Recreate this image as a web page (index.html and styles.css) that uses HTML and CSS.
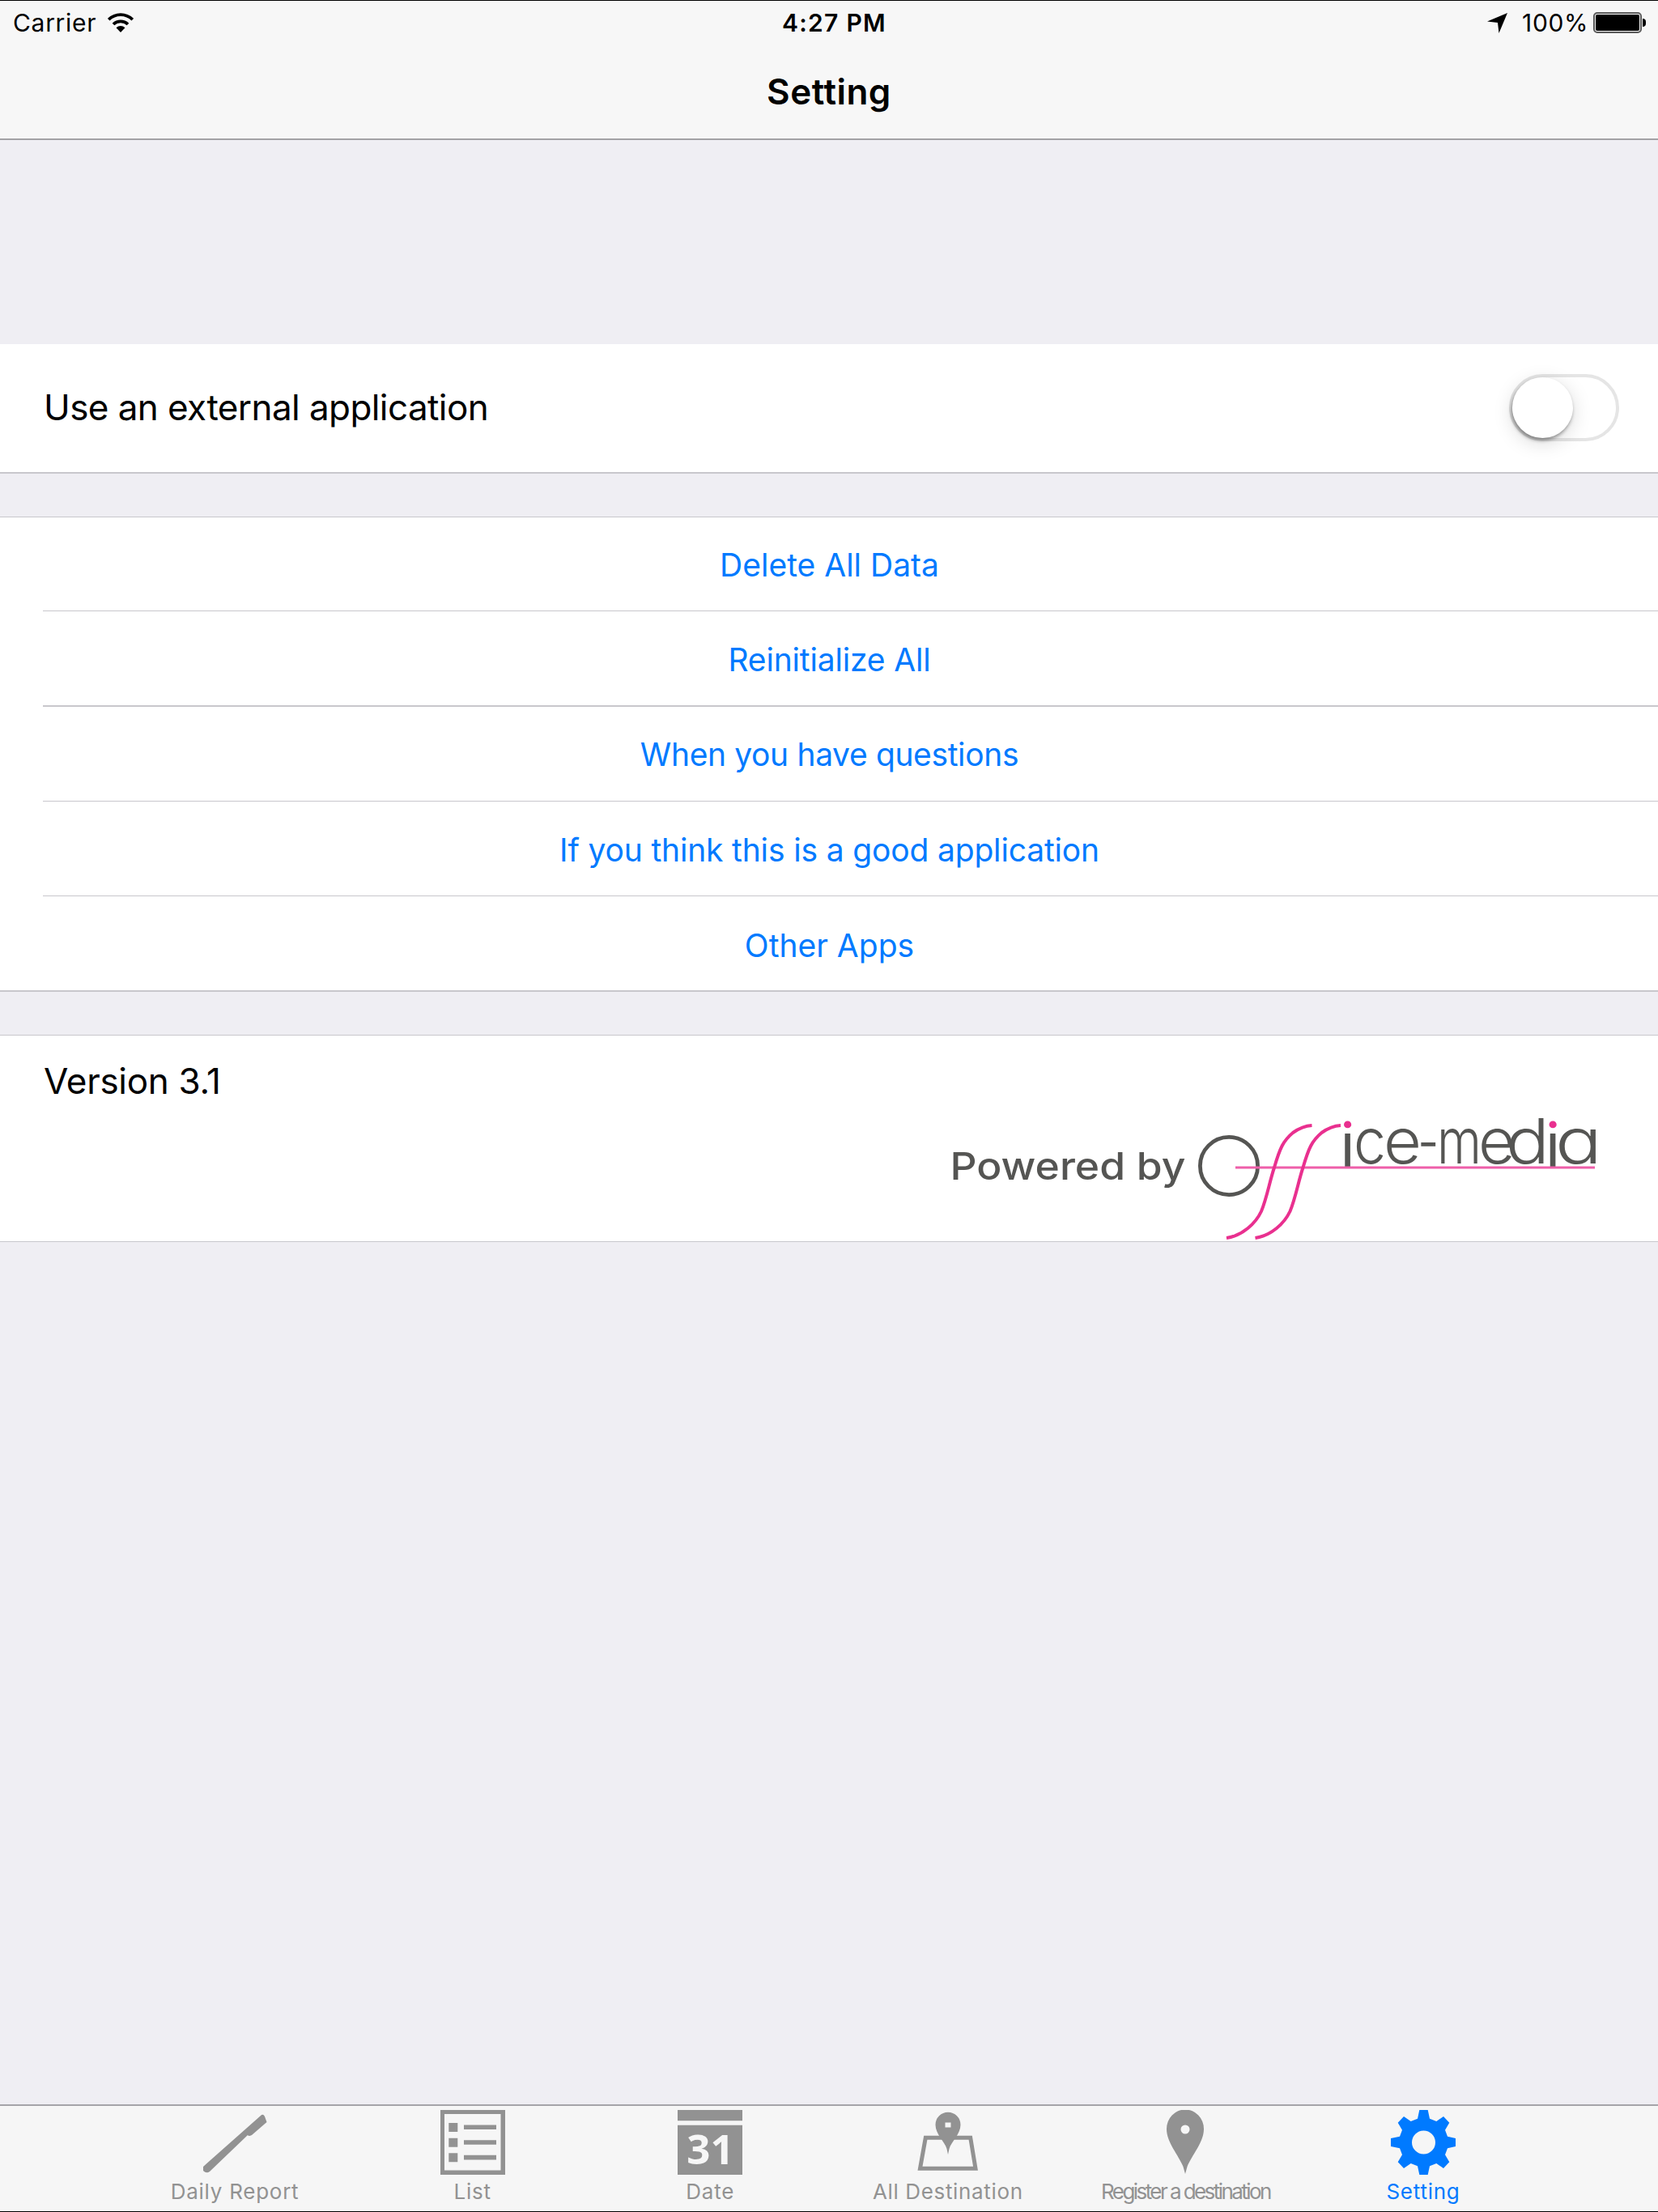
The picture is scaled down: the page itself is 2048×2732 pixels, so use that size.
FILE: index.html
```html
<!DOCTYPE html>
<html lang="en">
<head>
<meta charset="utf-8">
<title>Setting</title>
<link rel="stylesheet" href="styles.css">
</head>
<body>
<div class="screen">
  <header class="navbar">
    <div class="status">
      <div class="status-left">
        <span class="carrier">Carrier</span>
        <svg class="wifi" viewBox="0 0 32 24" width="32" height="24">
          <path d="M1.2 8.2A21 21 0 0 1 30.8 8.2M7 14A13 13 0 0 1 25 14" fill="none" stroke="#000" stroke-width="3.8"/>
          <path d="M10.500 18.300A8 8 0 0 1 21.500 18.300L16 24Z"/>
        </svg>
      </div>
      <span class="clock">4:27 PM</span>
      <div class="status-right">
        <svg class="location" viewBox="0 0 25 25" width="25" height="25"><path d="M25 0L14.500 25L13 12L0 10.500Z"/></svg>
        <span class="percent">100%</span>
        <span class="battery"><span class="battery-level"></span></span>
        <span class="battery-cap"></span>
      </div>
    </div>
    <h1 class="title">Setting</h1>
  </header>

  <main class="content">
    <section class="group group-switch">
      <span class="label label-tight">Use an external application</span>
      <span class="switch"><span class="switch-thumb"></span></span>
    </section>

    <section class="group actions">
      <div class="action"><a class="action-link hairline">Delete All Data</a></div>
      <div class="action"><a class="action-link tight low thick">Reinitialize All</a></div>
      <div class="action"><a class="action-link tighter hairline">When you have questions</a></div>
      <div class="action"><a class="action-link tight low hairline">If you think this is a good application</a></div>
      <div class="action"><a class="action-link lower">Other Apps</a></div>
    </section>

    <section class="group about">
      <span class="label version">Version 3.1</span>
      <svg class="logo" viewBox="1170 1382 801 149" width="801" height="149">
        <defs>
          <linearGradient id="dotted" gradientUnits="userSpaceOnUse" x1="0" y1="1382" x2="0" y2="1442">
            <stop offset=".24" stop-color="#e9308f"/>
            <stop offset=".24" stop-color="#555553"/>
          </linearGradient>
        </defs>
        <text class="powered" x="1173.500" y="1456.500" textLength="291" lengthAdjust="spacingAndGlyphs">Powered by</text>
        <circle cx="1518" cy="1440" r="35.600" fill="none" stroke="#555553" stroke-width="4.800"/>
        <text class="brand"><tspan class="brand-i" x="1655.500" y="1441">i</tspan><tspan x="1672" y="1437" textLength="40" lengthAdjust="spacingAndGlyphs">c</tspan><tspan x="1709" textLength="47" lengthAdjust="spacingAndGlyphs">e</tspan><tspan x="1751" textLength="26.500" lengthAdjust="spacingAndGlyphs">-</tspan><tspan x="1775" textLength="55" lengthAdjust="spacingAndGlyphs">m</tspan><tspan x="1826" textLength="46" lengthAdjust="spacingAndGlyphs">e</tspan><tspan x="1860" textLength="54" lengthAdjust="spacingAndGlyphs">d</tspan><tspan class="brand-i" x="1909" y="1441">i</tspan><tspan x="1921" y="1437" textLength="58" lengthAdjust="spacingAndGlyphs">a</tspan></text>
        <path d="M1526 1442H1970" stroke="#ee5fa9" stroke-width="3"/>
        <g fill="none" stroke="#e9308f" stroke-width="4">
          <path d="M1515 1529C1535 1526 1551 1511 1558 1496C1565 1479 1568 1460 1574 1442C1581 1418 1585 1409 1597 1399C1604 1394 1612 1390.500 1620.500 1390"/>
          <path d="M1550.500 1529C1570.500 1526 1586.500 1511 1593.500 1496C1600.500 1479 1603.500 1460 1609.500 1442C1616.500 1418 1620.500 1409 1632.500 1399C1639.500 1394 1647.500 1390.500 1656 1390"/>
        </g>
      </svg>
    </section>
  </main>

  <nav class="tabbar">
    <a class="tab">
      <svg class="tab-icon" viewBox="0 0 80 80"><path d="M1 70L72 7Q75 4 77 8L79.500 15L61 31Q57 33 56 31L9 76Q5 79 1 75Z"/></svg>
      <span class="tab-label">Daily Report</span>
    </a>
    <a class="tab">
      <svg class="tab-icon" viewBox="0 0 80 80"><path fill-rule="evenodd" d="M0 0H80V80H0ZM5 5V74.500H74.500V5Z"/><path d="M10.300 16h11v11h-11zM10.300 34.700h11v11h-11zM10.300 53.300h11v11h-11zM29 18.500h40v5.600H29zM29 37.200h40v5.600H29zM29 55.800h40v5.600H29z"/></svg>
      <span class="tab-label">List</span>
    </a>
    <a class="tab">
      <svg class="tab-icon" viewBox="0 0 80 80"><path d="M0 0H80V13.300H0ZM0 18.700H80V80H0Z"/><text class="day" x="40.500" y="66.500">31</text></svg>
      <span class="tab-label">Date</span>
    </a>
    <a class="tab">
      <svg class="tab-icon" viewBox="0 0 80 80"><path d="M12.300 34.200H67.700L74 72.200H5.500Z" fill="none" stroke="#929292" stroke-width="5"/><path fill-rule="evenodd" d="M40 55L38.500 48C36 39 24.500 30 24.500 18.300A15.500 15.500 0 0 1 55.500 18.300C55.500 30 44 39 41.500 48ZM36.500 15.500V21.500H43.500V15.500Z"/></svg>
      <span class="tab-label snug">All Destination</span>
    </a>
    <a class="tab">
      <svg class="tab-icon" viewBox="0 0 80 80"><path fill-rule="evenodd" d="M40 79L37.500 70C32 56 17 40 17 23.500A23 24 0 0 1 63 23.500C63 40 48 56 42.500 70ZM40 18.500A5.500 5.500 0 1 0 40 29.500A5.500 5.500 0 1 0 40 18.500Z"/></svg>
      <span class="tab-label condensed">Register a destination</span>
    </a>
    <a class="tab tab-active">
      <svg class="tab-icon" viewBox="0 0 80 80"><path fill-rule="evenodd" d="M35.300 0L33 10.700L24.700 14L16 8L8.700 15.700L14 24.700L11 32.700L0 35V45L11 47.300L14 55.300L8.700 64.300L16 72L24.700 66L33 69.300L35.300 80H45.700L48 69.300L56.300 66L65 72L72.300 64.300L67 55.300L70 47.300L80 45V35L70 32.700L67 24.700L72.300 15.700L65 8L56.300 14L48 10.700L45.700 0ZM40.500 25.500A14.500 14.500 0 1 0 40.500 54.500A14.500 14.500 0 1 0 40.500 25.500Z"/></svg>
      <span class="tab-label">Setting</span>
    </a>
  </nav>
</div>
</body>
</html>
```

FILE: styles.css
```css
* { box-sizing: border-box; }

body {
  margin: 0;
  background: #efeef3;
  color: #000;
  font-family: Inter, "Liberation Sans", sans-serif;
}

.screen {
  display: flex;
  flex-direction: column;
  height: 2732px;
  border-top: 1px solid #000;
  border-bottom: 1px solid #000;
}

/* Navigation bar */
.navbar {
  height: 172px;
  background: #f7f7f7;
  border-bottom: 2px solid #a3a2a6;
}

.status {
  display: grid;
  grid-template-columns: 1fr auto 1fr;
  align-items: center;
  height: 55px;
  padding: 0 15px 1px 16px;
  font-size: 30px;
  line-height: 36px;
}

.status-left,
.status-right { display: flex; align-items: center; }
.status-right { justify-content: flex-end; }
.carrier { letter-spacing: .7px; }
.wifi { margin: 0 0 1px 14px; }
.clock { margin-left: 12px; font-weight: 600; letter-spacing: 1.3px; }
.location { margin-right: 18px; }
.percent { margin-right: 6px; letter-spacing: .6px; }

.battery {
  width: 60px;
  height: 26px;
  padding: 1px;
  border: 2px solid #5a5a5a;
  border-radius: 5px;
}
.battery-level { display: block; height: 100%; border-radius: 2px; background: #000; }
.battery-cap {
  width: 4px;
  height: 10px;
  margin-left: 1px;
  border-radius: 0 4px 4px 0;
  background: #000;
}

.title {
  margin: 0;
  font-size: 44px;
  font-weight: 600;
  line-height: 115px;
  letter-spacing: .5px;
  text-align: center;
}

/* Grouped table */
.content { flex: 1; padding-top: 252px; }
.group { margin-bottom: 53px; background: #fff; }
.label { font-size: 44px; line-height: 56px; letter-spacing: -.3px; }
.label-tight { padding-bottom: 2px; letter-spacing: -.58px; }

.group-switch {
  display: flex;
  align-items: center;
  justify-content: space-between;
  height: 160px;
  padding: 0 48px 1px 54px;
  border-bottom: 2px solid #c8c7cc;
}

.switch {
  width: 136px;
  height: 83px;
  border: 4px solid #e5e5e5;
  border-radius: 42px;
}
.switch-thumb {
  display: block;
  width: 75px;
  height: 75px;
  border-radius: 50%;
  background: #fff;
  box-shadow: 0 6px 24px rgba(0, 0, 0, .15), -1px 3px 4px rgba(0, 0, 0, .38);
}

.actions { border-top: 1px solid #c8c7cc; border-bottom: 2px solid #c8c7cc; }
.action { padding-left: 53px; }
.action:first-child .action-link { height: 116px; }
.action-link {
  display: flex;
  align-items: center;
  justify-content: center;
  height: 116px;
  padding: 2px 52px 0 0;
  color: #007aff;
  font-size: 39px;
  line-height: 48px;
}
.action-link.hairline { height: 117px; border-bottom: 1px solid #c8c7cc; }
.action-link.thick { height: 118px; border-bottom: 2px solid #c8c7cc; }
.action-link.tight { letter-spacing: -.16px; }
.action-link.tighter { letter-spacing: -.36px; }
.action-link.low { padding-top: 3px; }
.action-link.lower { padding-top: 6px; }

.about {
  display: flex;
  align-items: flex-start;
  justify-content: space-between;
  height: 256px;
  padding: 0 77px 0 54px;
  border-top: 1px solid #c8c7cc;
  border-bottom: 1px solid #c8c7cc;
}
.version { line-height: 113px; }
.logo { display: block; margin-top: 103px; overflow: visible; }
.powered { font-size: 47px; font-weight: 500; fill: #555553; }
.brand {
  font-size: 77px;
  font-weight: 350;
  font-feature-settings: "cv11";
  fill: #555553;
}
.brand-i { font-size: 75px; font-weight: 400; fill: url(#dotted); }

/* Tab bar */
.tabbar {
  display: flex;
  justify-content: center;
  height: 132px;
  padding: 5px 0 0 0;
  background: #f6f6f6;
  border-top: 2px solid #a5a4a9;
}
.tab {
  display: flex;
  flex-direction: column;
  align-items: center;
  width: 293.6px;
  color: #929292;
}
.tab-active { color: #007aff; }
.tab-icon { display: block; width: 80px; height: 80px; fill: currentColor; }
.day {
  font-family: "Open Sans", sans-serif;
  font-size: 51px;
  font-weight: 700;
  text-anchor: middle;
  fill: #f6f6f6;
}
.tab-label {
  margin-top: 5px;
  font-size: 26px;
  line-height: 32px;
  letter-spacing: .75px;
  white-space: nowrap;
}
.snug { letter-spacing: .65px; }
.condensed { letter-spacing: -2.57px; }
```
